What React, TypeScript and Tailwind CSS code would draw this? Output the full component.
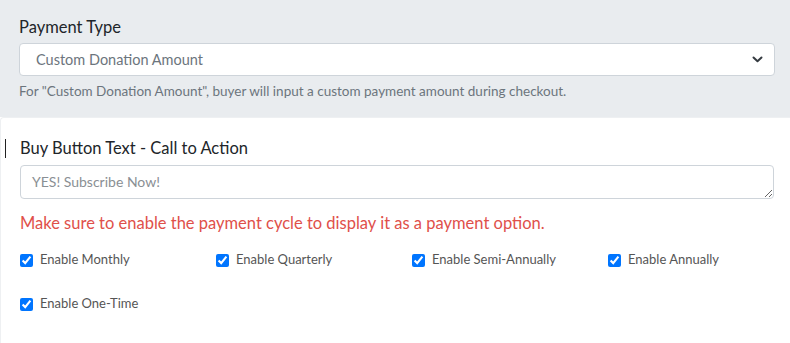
import { useState } from "react";

const cycles = [
  "Enable Monthly",
  "Enable Quarterly",
  "Enable Semi-Annually",
  "Enable Annually",
  "Enable One-Time",
];

export default function App() {
  const [paymentType, setPaymentType] = useState("custom");
  const [checked, setChecked] = useState<boolean[]>(cycles.map(() => true));

  const toggle = (i: number) => {
    setChecked((prev) => prev.map((v, j) => (j == i ? !v : v)));
  };

  return (
    <main
      className="w-[790px] h-[343px] bg-white overflow-hidden"
      style={{ fontFamily: "Lato, 'Noto Sans', sans-serif" }}
    >
      {/* payment type */}
      <div className="bg-[#e9ecef] pl-[19px] pr-[15px] pt-[15px] pb-[16px]">
        <label className="block text-[16.5px] leading-[24px] text-[#212529] mb-[4px]">
          Payment Type
        </label>
        <div className="relative">
          <select
            value={paymentType}
            onChange={(e) => setPaymentType(e.target.value)}
            className="appearance-none block w-full h-[33px] bg-white border border-[#ced4da] rounded-[4px] pl-[16px] pr-8 text-[14.5px] text-[#6c757d] outline-none"
            style={{ fontFamily: "Lato, 'Noto Sans', sans-serif" }}
          >
            <option value="custom">Custom Donation Amount</option>
            <option value="fixed">Fixed Amount</option>
          </select>
          <svg
            className="absolute right-[12px] top-[13px] pointer-events-none"
            width="11"
            height="7"
            viewBox="0 0 11 7"
            fill="none"
          >
            <path d="M1.5 1.5 L5.5 5.2 L9.5 1.5" stroke="#343a40" strokeWidth="2" strokeLinecap="round" strokeLinejoin="round" />
          </svg>
        </div>
        <p className="mt-[5px] text-[13.5px] leading-[20px] text-[#6c757d]">
          For "Custom Donation Amount", buyer will input a custom payment amount during checkout.
        </p>
      </div>

      {/* buy button + cycles */}
      <div className="bg-white border-l border-t border-[#eef0f2] rounded-tl-[4px] pt-[18px] pr-[16px] h-full">
        <div className="flex items-center h-[24px] mb-[5px]">
          <div className="ml-[4px] w-px h-[19px] bg-[#222]" />
          <label className="ml-[14px] text-[16.5px] leading-[24px] text-[#212529]">
            Buy Button Text - Call to Action
          </label>
        </div>
        <textarea
          rows={1}
          placeholder="YES! Subscribe Now!"
          className="block ml-[19px] w-[754px] h-[34px] border border-[#ced4da] rounded-[4px] px-[11px] py-[5px] text-[14px] leading-[22px] text-[#495057] placeholder:text-[#8a8f94] outline-none"
          style={{ fontFamily: "Lato, 'Noto Sans', sans-serif" }}
        />
        <p className="ml-[19px] mt-[12px] text-[16.5px] leading-[24px] text-[#e0504a]">
          Make sure to enable the payment cycle to display it as a payment option.
        </p>
        <div className="ml-[19px] mt-[15px] grid grid-cols-[repeat(4,196px)] gap-y-[24px]">
          {cycles.map((c, i) => (
            <label key={c} className="flex items-center h-[20px] gap-[7px] text-[13px] text-[#555]">
              <input
                type="checkbox"
                checked={checked[i]}
                onChange={() => toggle(i)}
                className="m-0 w-[13px] h-[13px] accent-[#0075ff]"
              />
              {c}
            </label>
          ))}
        </div>
      </div>
    </main>
  );
}
